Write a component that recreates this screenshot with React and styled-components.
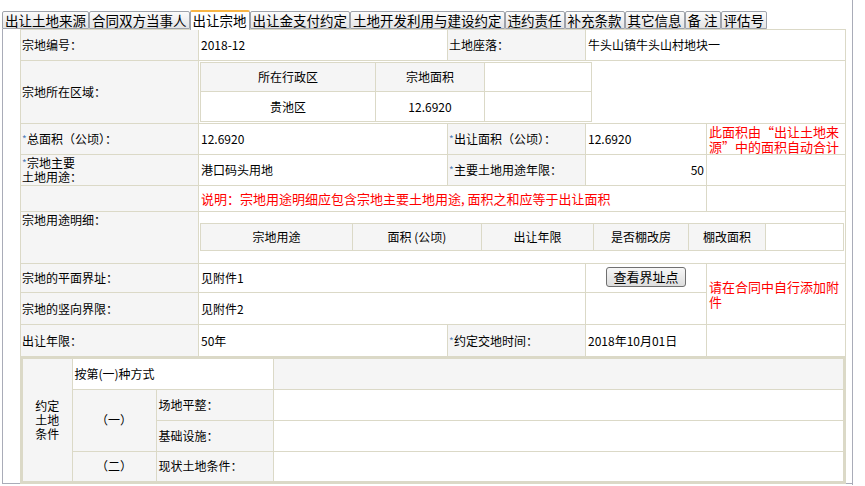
import React from 'react';
import styled, { createGlobalStyle } from 'styled-components';

const tabs = ['出让土地来源', '合同双方当事人', '出让宗地', '出让金支付约定', '土地开发利用与建设约定', '违约责任', '补充条款', '其它信息', '备 注', '评估号'];

export default function App() {
    return (
        <Frame>
            <GlobalStyle />
            <TabBar>
                {tabs.map((t) => (
                    <Tab key={t} $active={t === '出让宗地'}>{t}</Tab>
                ))}
            </TabBar>
            <Panel>
                <Grid>
                    <colgroup>
                        <col style={{ width: 178 }} />
                        <col style={{ width: 249 }} />
                        <col style={{ width: 138 }} />
                        <col style={{ width: 121 }} />
                        <col style={{ width: 139 }} />
                    </colgroup>
                    <tbody>
                        <Row $h={31}>
                            <Label>宗地编号：</Label>
                            <Value>2018-12</Value>
                            <Label>土地座落：</Label>
                            <Value colSpan={2}>牛头山镇牛头山村地块一</Value>
                        </Row>
                        <Row $h={63}>
                            <Label>宗地所在区域：</Label>
                            <Holder colSpan={4} $pad="1px 0 0 1px">
                                <Nested $w={392}>
                                    <colgroup>
                                        <col style={{ width: 175 }} />
                                        <col style={{ width: 109 }} />
                                        <col />
                                    </colgroup>
                                    <tbody>
                                        <Row $h={29}>
                                            <Head>所在行政区</Head>
                                            <Head>宗地面积</Head>
                                            <Plain />
                                        </Row>
                                        <Row $h={30}>
                                            <Plain>贵池区</Plain>
                                            <Plain>12.6920</Plain>
                                            <Plain />
                                        </Row>
                                    </tbody>
                                </Nested>
                            </Holder>
                        </Row>
                        <Row $h={31}>
                            <Label><Star>*</Star>总面积（公顷）：</Label>
                            <Value>12.6920</Value>
                            <Label><Star>*</Star>出让面积（公顷）：</Label>
                            <Value>12.6920</Value>
                            <Note>此面积由“出让土地来<br />源”中的面积自动合计</Note>
                        </Row>
                        <Row $h={31}>
                            <Label><Star>*</Star>宗地主要<br />土地用途：</Label>
                            <Value>港口码头用地</Value>
                            <Label><Star>*</Star>主要土地用途年限：</Label>
                            <Value $align="right">50</Value>
                            <Value />
                        </Row>
                        <Row $h={26}>
                            <Label />
                            <Note colSpan={3}>说明：宗地用途明细应包含宗地主要土地用途, 面积之和应等于出让面积</Note>
                            <Value />
                        </Row>
                        <Row $h={52}>
                            <Label $top>宗地用途明细：</Label>
                            <Holder colSpan={4} $pad="11px 1px 0 1px">
                                <Nested $w={644}>
                                    <colgroup>
                                        <col style={{ width: 152 }} />
                                        <col style={{ width: 129 }} />
                                        <col style={{ width: 112 }} />
                                        <col style={{ width: 95 }} />
                                        <col style={{ width: 77 }} />
                                        <col />
                                    </colgroup>
                                    <tbody>
                                        <Row $h={27}>
                                            <Head>宗地用途</Head>
                                            <Head>面积 (公顷)</Head>
                                            <Head>出让年限</Head>
                                            <Head>是否棚改房</Head>
                                            <Head>棚改面积</Head>
                                            <Plain />
                                        </Row>
                                    </tbody>
                                </Nested>
                            </Holder>
                        </Row>
                        <Row $h={29}>
                            <Label>宗地的平面界址：</Label>
                            <Value colSpan={2}>见附件1</Value>
                            <Value $align="center" $valign="top">
                                <ViewButton>查看界址点</ViewButton>
                            </Value>
                            <Note rowSpan={2}>请在合同中自行添加附件</Note>
                        </Row>
                        <Row $h={32}>
                            <Label>宗地的竖向界限：</Label>
                            <Value colSpan={2}>见附件2</Value>
                            <Value />
                        </Row>
                        <Row $h={32}>
                            <Label>出让年限：</Label>
                            <Value>50年</Value>
                            <Label><Star>*</Star>约定交地时间：</Label>
                            <Value>2018年10月01日</Value>
                            <Value />
                        </Row>
                        <Row $h={127}>
                            <Holder colSpan={5} $pad="0">
                                <Terms>
                                    <colgroup>
                                        <col style={{ width: 50 }} />
                                        <col style={{ width: 84 }} />
                                        <col style={{ width: 117 }} />
                                        <col />
                                    </colgroup>
                                    <tbody>
                                        <Row $h={31}>
                                            <TermCell rowSpan={4} $shade $center>约定<br />土地<br />条件</TermCell>
                                            <TermCell colSpan={2}>按第(一)种方式</TermCell>
                                            <TermCell $shade />
                                        </Row>
                                        <Row $h={31}>
                                            <TermCell rowSpan={2} $shade $center>（一）</TermCell>
                                            <TermCell $shade>场地平整：</TermCell>
                                            <TermCell />
                                        </Row>
                                        <Row $h={31}>
                                            <TermCell $shade>基础设施：</TermCell>
                                            <TermCell />
                                        </Row>
                                        <Row $h={31}>
                                            <TermCell $shade $center>（二）</TermCell>
                                            <TermCell $shade>现状土地条件：</TermCell>
                                            <TermCell />
                                        </Row>
                                    </tbody>
                                </Terms>
                            </Holder>
                        </Row>
                    </tbody>
                </Grid>
            </Panel>
        </Frame>
    );
}

const GlobalStyle = createGlobalStyle`
    body {
        margin: 0;
        background: #fff;
        font-family: "Noto Sans CJK SC", "Liberation Sans", sans-serif;
        font-size: 12px;
        color: #000;
    }
`;

const Frame = styled.div`
    width: 852px;
    height: 485px;
    border-right: 1px solid #a9acb8;
`;

const TabBar = styled.div`
    display: flex;
    align-items: flex-end;
    height: 29px;
    padding-left: 2px;
    box-sizing: border-box;
`;

const Tab = styled.div`
    position: relative;
    box-sizing: border-box;
    height: ${(p) => (p.$active ? '20px' : '18px')};
    margin-bottom: ${(p) => (p.$active ? '-1px' : '0')};
    padding: 0 2px;
    border: 1px solid #9fa3ab;
    border-top: ${(p) => (p.$active ? '2px solid #f8b545' : '1px solid #9fa3ab')};
    border-bottom: ${(p) => (p.$active ? 'none' : '1px solid #9fa3ab')};
    border-radius: 2px 2px 0 0;
    background: ${(p) => (p.$active ? '#fff' : 'linear-gradient(#fbfbfb, #e3e4e6)')};
    font-size: 13.5px;
    line-height: 16px;
    white-space: pre;
    color: #000;
    z-index: ${(p) => (p.$active ? 1 : 0)};
`;

const Panel = styled.div`
    margin-left: 2px;
    height: 455px;
    box-sizing: border-box;
    padding-left: 17px;
    border-left: 1px solid #a9acb8;
    border-bottom: 1px solid #a9acb8;
`;

const Grid = styled.table`
    width: 825px;
    border-collapse: collapse;
    table-layout: fixed;
    border: 1px solid #dbd9c7;
`;

const Row = styled.tr`
    height: ${(p) => p.$h}px;
`;

const Cell = styled.td`
    border: 1px solid #dbd9c7;
    padding: 0 2px;
    line-height: 14px;
    vertical-align: middle;
    overflow: hidden;
`;

const Label = styled(Cell)`
    background: #f5f5f5;
    padding-left: 1px;
    vertical-align: ${(p) => (p.$top ? 'top' : 'middle')};
    padding-top: ${(p) => (p.$top ? '1px' : '0')};
`;

const Value = styled(Cell)`
    background: #fff;
    text-align: ${(p) => p.$align || 'left'};
    vertical-align: ${(p) => p.$valign || 'middle'};
    padding-top: ${(p) => (p.$valign === 'top' ? '3px' : '0')};
`;

const Note = styled(Cell)`
    color: #ff0000;
    font-size: 13px;
    line-height: 15px;
    background: #fff;
`;

const Holder = styled(Cell)`
    padding: ${(p) => p.$pad};
    vertical-align: top;
`;

const Nested = styled.table`
    width: ${(p) => p.$w}px;
    border-collapse: collapse;
    table-layout: fixed;
`;

const Head = styled(Cell)`
    background: #f5f5f5;
    text-align: center;
`;

const Plain = styled(Cell)`
    background: #fff;
    text-align: center;
`;

const Terms = styled.table`
    width: 100%;
    border-collapse: collapse;
    table-layout: fixed;
    border: 2px solid #dbd9c7;
`;

const TermCell = styled(Cell)`
    background: ${(p) => (p.$shade ? '#f5f5f5' : '#fff')};
    text-align: ${(p) => (p.$center ? 'center' : 'left')};
    line-height: 14px;
`;

const Star = styled.span`
    display: inline-block;
    width: 5px;
    color: #4f7db6;
    font-size: 10px;
    vertical-align: top;
`;

const ViewButton = styled.button`
    height: 20px;
    padding: 0 6px;
    border: 1px solid #707070;
    border-radius: 3px;
    background: linear-gradient(#f7f7f7, #dddddd);
    font-family: "Noto Sans CJK SC", sans-serif;
    font-size: 13px;
    line-height: 16px;
    color: #000;
`;
